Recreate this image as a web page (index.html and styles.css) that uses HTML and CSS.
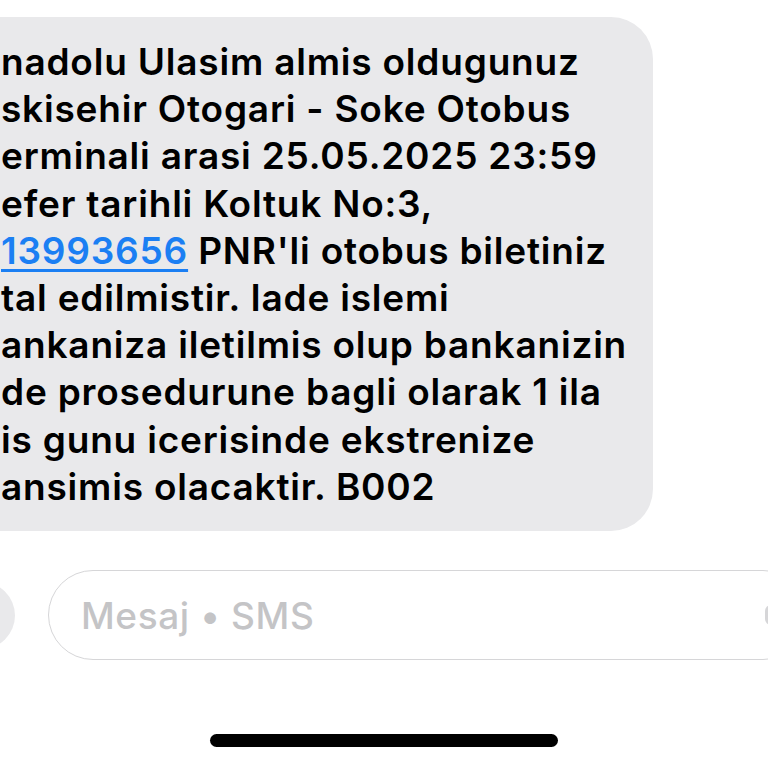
FILE: index.html
```html
<!DOCTYPE html>
<html lang="tr">
<head>
<meta charset="utf-8">
<title>Mesaj</title>
<link rel="stylesheet" href="styles.css">
</head>
<body>
<div class="screen">
  <div class="bubble">
    <p class="msg">nadolu Ulasim almis oldugunuz<br>skisehir Otogari - Soke Otobus<br>erminali arasi 25.05.2025 23:59<br>efer tarihli Koltuk No:3,<br><a class="link" href="#">13993656</a> PNR'li otobus biletiniz<br>tal edilmistir. Iade islemi<br>ankaniza iletilmis olup bankanizin<br>de prosedurune bagli olarak 1 ila<br>is gunu icerisinde ekstrenize<br>ansimis olacaktir. B002</p>
  </div>
  <div class="composer">
    <div class="plus"></div>
    <div class="field">
      <span class="placeholder">Mesaj • SMS</span>
      <span class="mic"></span>
    </div>
  </div>
  <div class="home"></div>
</div>
</body>
</html>
```
FILE: styles.css
```css
html, body {
  margin: 0;
  padding: 0;
  background: #ffffff;
}
body {
  width: 768px;
  height: 768px;
  overflow: hidden;
}
.screen {
  width: 768px;
  height: 768px;
  overflow: hidden;
  display: flex;
  flex-direction: column;
}
.bubble {
  margin-top: 17px;
  width: 653px;
  box-sizing: border-box;
  background: #e9e9eb;
  border-radius: 0 42px 42px 0;
  padding: 21px 0 21px 1px;
}
.msg {
  margin: 0;
  font-family: Inter, "Noto Sans", sans-serif;
  font-weight: 600;
  font-size: 37px;
  letter-spacing: 0.8px;
  line-height: 47.2px;
  color: #000000;
  white-space: nowrap;
}
.link {
  color: #1b7ff3;
  text-decoration: underline;
  text-decoration-thickness: 2.5px;
  text-underline-offset: 5px;
}
.composer {
  margin-top: 39px;
  display: flex;
  align-items: center;
  gap: 33px;
}
.plus {
  flex: none;
  width: 67px;
  height: 67px;
  margin-left: -52px;
  border-radius: 50%;
  background: #e9e9eb;
}
.field {
  flex: none;
  width: 760px;
  height: 90px;
  box-sizing: border-box;
  border: 1.5px solid #d6d6d8;
  border-radius: 45px;
  display: flex;
  align-items: center;
  justify-content: space-between;
  padding: 0 30px 0 32px;
}
.placeholder {
  font-family: Inter, "Noto Sans", sans-serif;
  font-weight: 500;
  font-size: 37px;
  letter-spacing: 0.6px;
  color: #c4c4c6;
}
.mic {
  width: 12px;
  height: 20px;
  border-radius: 6px;
  background: #d6d6d8;
}
.home {
  margin: 74px auto 0;
  width: 348px;
  height: 13px;
  border-radius: 7px;
  background: #000000;
}
```
